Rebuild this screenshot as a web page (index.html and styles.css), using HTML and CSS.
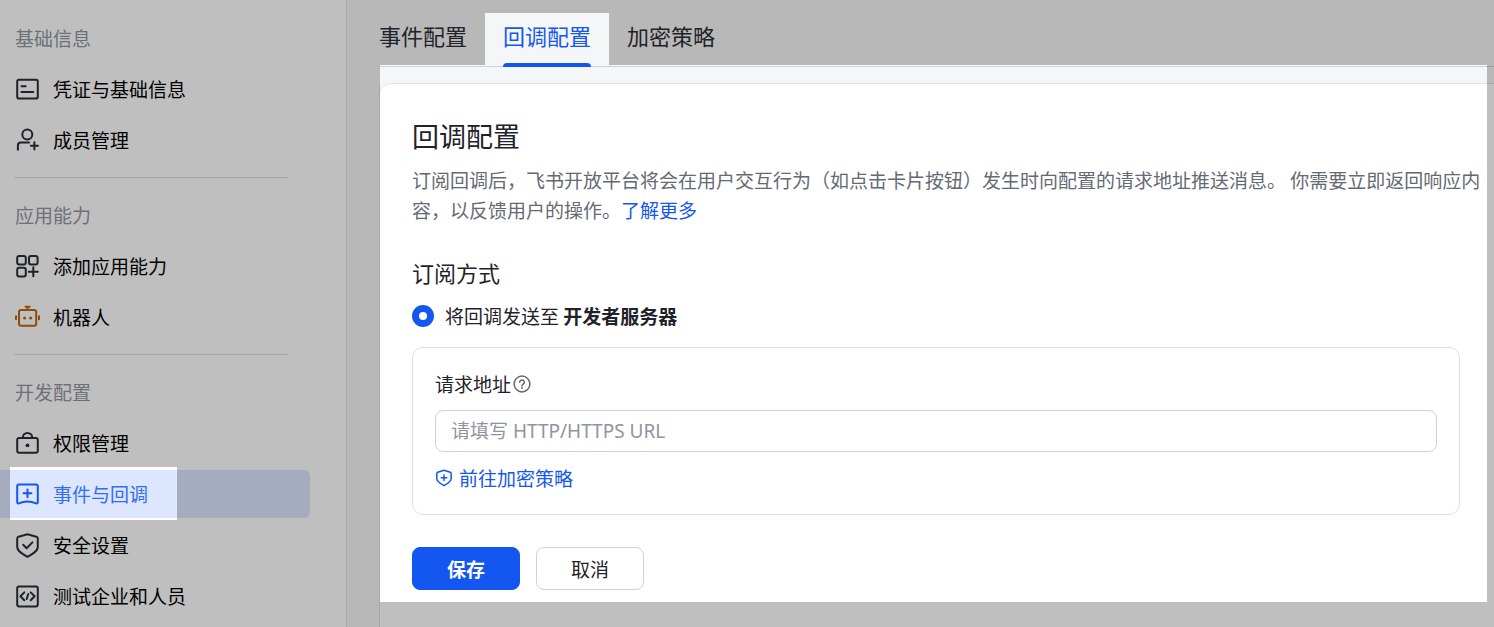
FILE: index.html
```html
<!DOCTYPE html>
<html lang="zh-CN">
<head>
<meta charset="utf-8">
<meta name="viewport" content="width=device-width, initial-scale=1">
<title>回调配置</title>
<link rel="stylesheet" href="styles.css">
</head>
<body>
<div class="layout">
  <nav class="sidebar">
    <section class="group">
      <h2 class="group-title">基础信息</h2>
      <div class="group-items">
        <a class="item" href="#"><svg class="icon" viewBox="0 0 26 26"><rect x="3.2" y="3.7" width="20.6" height="18.8" rx="1.8"/><path d="M7.5 10.2h4.2M7.5 16h11.8"/></svg>凭证与基础信息</a>
        <a class="item" href="#"><svg class="icon" viewBox="0 0 26 26"><circle cx="13.3" cy="7.5" r="5"/><path d="M3.9 22.8v-4.2q0-3 3-3H15M16.8 18.8h7.2M20.4 15.2v7.2"/></svg>成员管理</a>
      </div>
    </section>
    <section class="group">
      <h2 class="group-title">应用能力</h2>
      <div class="group-items">
        <a class="item" href="#"><svg class="icon" viewBox="0 0 26 26"><rect x="3.2" y="3" width="8.6" height="8.6" rx="2"/><rect x="15" y="3" width="8.6" height="8.6" rx="2"/><rect x="3.2" y="14.8" width="8.6" height="8.6" rx="2"/><path d="M14.8 18.8h9M19.3 14.3v9"/></svg>添加应用能力</a>
        <a class="item" href="#"><svg class="icon icon-bot" viewBox="0 0 26 26"><rect x="5" y="6" width="17.2" height="15.8" rx="2"/><path d="M11.5 2.8h4.2M13.6 2.8V6M2 12.2v3M25 12.2v3"/><circle class="dot" cx="10.6" cy="14" r="1.5"/><circle class="dot" cx="16.6" cy="14" r="1.5"/></svg>机器人</a>
      </div>
    </section>
    <section class="group">
      <h2 class="group-title">开发配置</h2>
      <div class="group-items">
        <a class="item" href="#"><svg class="icon" viewBox="0 0 26 26"><rect x="3.2" y="8" width="20.6" height="14.8" rx="2"/><path d="M8.8 8V7.500a4.700 4.500 0 0 1 9.400 0V8"/><circle class="dot" cx="13.5" cy="15.300" r="1.900"/></svg>权限管理</a>
        <a class="item item-active" href="#" aria-current="page"><svg class="icon" viewBox="0 0 26 26"><path d="M5 3.500h17q1.800 0 1.800 1.800v15.800q0 1.800-1.700 1.200Q13.500 18.600 4.900 22.300q-1.700.6-1.700-1.200V5.300Q3.200 3.500 5 3.500zM9.600 12.300h7.800M13.500 8.400v7.800"/></svg>事件与回调</a>
        <a class="item" href="#"><svg class="icon" viewBox="0 0 26 26"><path d="M13.500 2.200 22.400 4.700q1.400.4 1.400 1.800v8.200c0 4.600-5.600 7.600-10.300 10.100C8.800 22.300 3.200 19.300 3.200 14.700V6.500q0-1.400 1.400-1.800zM9.200 12.800l3.400 3.400 5.800-5.800"/></svg>安全设置</a>
        <a class="item" href="#"><svg class="icon" viewBox="0 0 26 26"><rect x="3.200" y="3.400" width="20.600" height="20" rx="1.800"/><path d="M10.300 9.400 6.400 13.300l3.900 3.900M16.700 9.400l3.900 3.900-3.900 3.900M14.300 11l-1.600 5"/></svg>测试企业和人员</a>
      </div>
    </section>
  </nav>

  <main class="main">
    <div class="tabs" role="tablist">
      <button class="tab" type="button" role="tab" aria-selected="false">事件配置</button>
      <button class="tab tab-active" type="button" role="tab" aria-selected="true">回调配置</button>
      <button class="tab" type="button" role="tab" aria-selected="false">加密策略</button>
    </div>
    <div class="strip"><div class="strip-lit"></div></div>
    <div class="card">
      <div class="card-lit">
        <form class="content">
          <h1 class="title">回调配置</h1>
          <p class="desc">订阅回调后，飞书开放平台将会在用户交互行为（如点击卡片按钮）发生时向配置的请求地址推送消息。 你需要立即返回响应内容，以反馈用户的操作。<a class="link" href="#">了解更多</a></p>
          <h2 class="subtitle">订阅方式</h2>
          <label class="choice"><input class="radio" type="radio" name="mode" checked><span>将回调发送至 <b>开发者服务器</b></span></label>
          <div class="box">
            <label class="field-label" for="url">请求地址<svg class="help" viewBox="0 0 18 18"><circle cx="9" cy="9" r="7.900"/><path d="M6.700 7.300a2.300 2.200 0 1 1 3.600 1.700q-1.300.8-1.300 1.900"/><circle class="dot" cx="9" cy="13" r=".9"/></svg></label>
            <input class="text" id="url" type="text" placeholder="请填写 HTTP/HTTPS URL">
            <a class="link policy" href="#"><svg class="shield" viewBox="0 0 18 18"><path d="M9 1.300 15.300 3.200q.9.3.9 1.200v5.100c0 3.200-3.900 5.400-7.200 7.200C5.700 14.900 1.800 12.700 1.800 9.500V4.400q0-.9.900-1.200zM6.200 8.800h5.600M9 6v5.600"/></svg>前往加密策略</a>
          </div>
          <div class="actions">
            <button class="btn btn-primary" type="submit">保存</button>
            <button class="btn" type="button">取消</button>
          </div>
        </form>
      </div>
    </div>
  </main>
</div>
</body>
</html>
```
FILE: styles.css
```css
* {
  box-sizing: border-box;
}

body {
  margin: 0;
  font: 19px/28px "Noto Sans CJK SC", sans-serif;
  color: #1f2329;
  background: #b8b8b9;
}

h1, h2, p {
  margin: 0;
  font-weight: 400;
}

button, input {
  font: inherit;
  color: inherit;
}

a {
  text-decoration: none;
}

.layout {
  display: flex;
  min-height: 100vh;
}

/* Sidebar */
.sidebar {
  flex: 0 0 347px;
  background: #bfbfbf;
  border-right: 1px solid #a6a7a8;
}

.group-title {
  padding: 24px 15px 13px;
  font-size: 19px;
  line-height: 28px;
  color: #6c7077;
}

.group + .group::before {
  content: "";
  display: block;
  height: 1px;
  margin: 13px 58px 0 14px;
  background: #a6a7a8;
}

.group + .group .group-title {
  padding-top: 23px;
}

.group-items {
  display: grid;
  gap: 3px;
}

.item {
  position: relative;
  display: flex;
  align-items: center;
  gap: 13px;
  height: 48px;
  margin-right: 36px;
  padding-left: 14px;
  color: #000;
}

.icon {
  width: 26px;
  height: 26px;
  fill: none;
  stroke: #1f2329;
  stroke-width: 2;
  stroke-linecap: round;
  stroke-linejoin: round;
}

.icon .dot {
  fill: #1f2329;
  stroke: none;
}

.icon-bot {
  stroke: #8f4d05;
}

.icon-bot .dot {
  fill: #8f4d05;
}

.item-active {
  z-index: 0;
  color: #336df4;
  background: #a6acbf;
  border-radius: 0 6px 6px 0;
}

.item-active .icon {
  stroke: #1456f0;
}

.item-active::before {
  content: "";
  position: absolute;
  z-index: -1;
  inset: -3px auto -2px 10px;
  width: 167px;
  border: solid #fff;
  border-width: 3px 0 2px;
  background: #dde6ff;
}

/* Main column */
.main {
  flex: 1;
  min-width: 0;
  display: flex;
  flex-direction: column;
  padding-left: 32px;
}

.tabs {
  display: flex;
  margin-left: -18px;
  padding-top: 13px;
}

.tab {
  position: relative;
  height: 52px;
  padding: 0 18px 8px;
  border: 0;
  background: none;
  font-size: 22px;
}

.tab-active {
  color: #1456f0;
  background: #f5f6f7;
}

.tab-active::after {
  content: "";
  position: absolute;
  inset: auto 18px -2px;
  height: 4px;
  border-radius: 4px 4px 0 0;
  background: #1456f0;
}

.strip {
  padding: 0 7px 0 1px;
  background: linear-gradient(#9c9ea0, #9c9ea0) 0 1px / 100% 1px no-repeat;
}

.strip-lit {
  height: 18px;
  background: linear-gradient(#d0d3d6, #d0d3d6) 0 1px / 100% 1px no-repeat #f5f6f7;
}

.card {
  flex: 1;
  padding-right: 7px;
  border-left: 1px solid #a6a7a8;
  background: linear-gradient(#a6a7a8, #a6a7a8) 0 0 / 100% 1px no-repeat #bfbfbf;
}

.card-lit {
  background: #f5f6f7;
}

.content {
  padding: 34px 0 12px 32px;
  border-top: 1px solid #dee0e3;
  border-radius: 12px 0 0 0;
  background: #fff;
}

.title {
  font-size: 27px;
  line-height: 36px;
}

.desc {
  margin-top: 11px;
  line-height: 30px;
  color: #646a73;
}

.link {
  color: #1456f0;
}

.subtitle {
  margin-top: 32px;
  font-size: 22px;
  line-height: 30px;
}

.choice {
  display: flex;
  align-items: center;
  gap: 11px;
  margin-top: 15px;
}

.radio {
  appearance: none;
  width: 22px;
  height: 22px;
  margin: 0;
  border: 7px solid #1456f0;
  border-radius: 50%;
  background: #fff;
}

.box {
  display: grid;
  margin: 17px 27px 0 0;
  padding: 22px;
  border: 1px solid #dee0e3;
  border-radius: 11px;
}

.field-label {
  display: flex;
  align-items: center;
  gap: 2px;
}

.help, .shield {
  width: 18px;
  height: 18px;
  fill: none;
  stroke: #646a73;
  stroke-width: 1.5;
  stroke-linecap: round;
  stroke-linejoin: round;
}

.help .dot {
  fill: #646a73;
  stroke: none;
}

.shield {
  stroke: #1456f0;
}

.text {
  width: 100%;
  height: 42px;
  margin: 12px 0;
  padding: 0 15px;
  border: 1px solid #d0d3d6;
  border-radius: 8px;
  background: #fff;
  font-family: "Noto Sans", "Noto Sans CJK SC", sans-serif;
}

.text::placeholder {
  color: #8f959e;
  opacity: 1;
}

.policy {
  display: flex;
  align-items: center;
  justify-self: start;
  gap: 6px;
}

.actions {
  display: flex;
  gap: 16px;
  margin-top: 32px;
}

.btn {
  width: 108px;
  height: 43px;
  padding: 0;
  border: 1px solid #d0d3d6;
  border-radius: 8px;
  background: #fff;
}

.btn-primary {
  border-color: #1456f0;
  background: #1456f0;
  color: #fff;
  font-weight: 700;
}
```
